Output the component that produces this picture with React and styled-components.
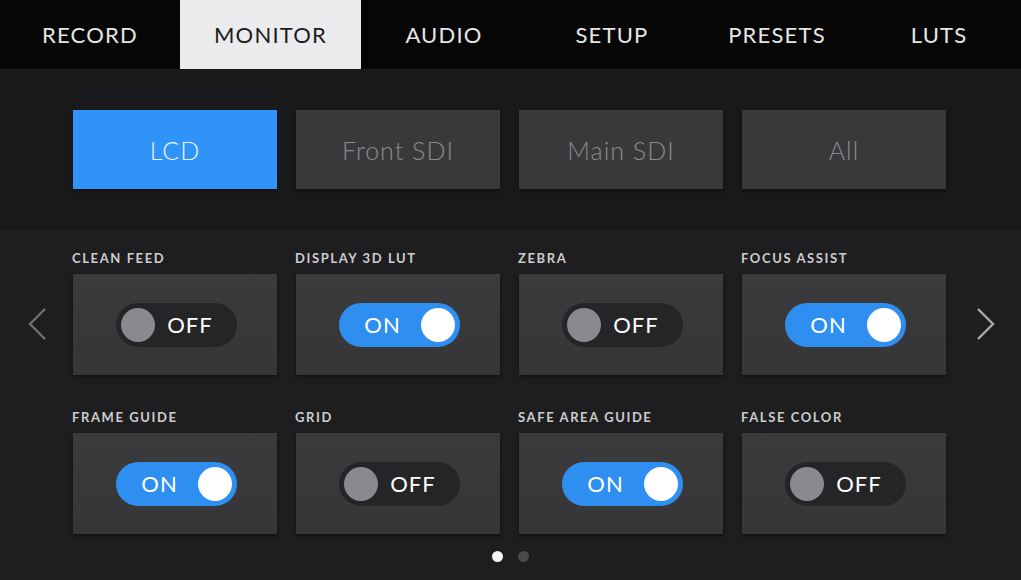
import React from "react";
import styled, { createGlobalStyle } from "styled-components";

const GlobalStyle = createGlobalStyle`
  html, body {
    margin: 0;
    padding: 0;
    background: #1e1e20;
  }
  body {
    font-family: Lato, "Open Sans", sans-serif;
  }
`;

const Screen = styled.div`
  width: 1021px;
  height: 580px;
  overflow: hidden;
  background: #1e1e20;
  display: flex;
  flex-direction: column;
`;

const TabBar = styled.div`
  display: flex;
  height: 69px;
  background: #060606;
`;

const Tab = styled.div`
  width: ${(p) => p.$w}px;
  display: flex;
  align-items: center;
  justify-content: center;
  font-size: 22px;
  letter-spacing: 1.2px;
  color: ${(p) => (p.$active ? "#1d1d1f" : "#e6e6e6")};
  background: ${(p) => (p.$active ? "#ebebed" : "transparent")};
`;

const OutputBand = styled.div`
  background: #19191b;
  height: 161px;
  box-sizing: border-box;
  padding: 41px 0 0 73px;
  display: flex;
  gap: 19px;
`;

const OutputButton = styled.div`
  width: 204px;
  height: 79px;
  display: flex;
  align-items: center;
  justify-content: center;
  font-size: 25px;
  font-weight: 300;
  letter-spacing: 1px;
  color: ${(p) => (p.$active ? "#eef5ff" : "#8b8b8e")};
  background: ${(p) => (p.$active ? "#2f93f7" : "#39393b")};
  box-shadow: 0 2px 3px rgba(0, 0, 0, 0.45);
`;

const Lower = styled.div`
  flex: 1;
  display: flex;
  flex-direction: column;
  align-items: center;
  padding-top: 20px;
`;

const Middle = styled.div`
  display: flex;
  width: 1021px;
`;

const Side = styled.div`
  width: ${(p) => p.$w}px;
  display: flex;
  justify-content: center;
  padding-top: 57px;
  padding-left: ${(p) => p.$shift || 0}px;
  box-sizing: border-box;
`;

const Grid = styled.div`
  display: grid;
  grid-template-columns: repeat(4, 204px);
  column-gap: 19px;
  row-gap: 34px;
`;

const Cell = styled.div`
  display: flex;
  flex-direction: column;
`;

const Label = styled.div`
  height: 16px;
  line-height: 16px;
  margin-bottom: 8px;
  margin-left: -1px;
  font-size: 13px;
  font-weight: 700;
  letter-spacing: 1.6px;
  color: #cdcdcf;
`;

const Card = styled.div`
  height: 101px;
  background: linear-gradient(180deg, #3b3b3d 0%, #363638 100%);
  box-shadow: 0 2px 4px rgba(0, 0, 0, 0.5);
  display: flex;
  align-items: center;
  justify-content: center;
`;

const Pill = styled.div`
  width: 121px;
  height: 44px;
  border-radius: 22px;
  box-sizing: border-box;
  padding: 0 5px;
  margin-left: 2px;
  display: flex;
  align-items: center;
  flex-direction: ${(p) => (p.$on ? "row-reverse" : "row")};
  background: ${(p) => (p.$on ? "#2f8ff0" : "#252528")};
`;

const Knob = styled.div`
  width: 34px;
  height: 34px;
  border-radius: 50%;
  flex-shrink: 0;
  background: ${(p) => (p.$on ? "#ffffff" : "#898a8f")};
`;

const State = styled.div`
  flex: 1;
  text-align: center;
  font-size: 22px;
  letter-spacing: 1px;
  color: #ffffff;
  margin: ${(p) => (p.$on ? "0 0 0 1px" : "0 6px 0 0")};
`;

const Dots = styled.div`
  display: flex;
  gap: 15px;
  margin-top: 17px;
`;

const Dot = styled.div`
  width: 11px;
  height: 11px;
  border-radius: 50%;
  background: ${(p) => (p.$active ? "#f4f4f6" : "#4a4a4d")};
`;

const tabs = [
  ["RECORD", 180],
  ["MONITOR", 181],
  ["AUDIO", 166],
  ["SETUP", 170],
  ["PRESETS", 160],
  ["LUTS", 164],
];

const outputs = ["LCD", "Front SDI", "Main SDI", "All"];

const settings = [
  ["CLEAN FEED", false],
  ["DISPLAY 3D LUT", true],
  ["ZEBRA", false],
  ["FOCUS ASSIST", true],
  ["FRAME GUIDE", true],
  ["GRID", false],
  ["SAFE AREA GUIDE", true],
  ["FALSE COLOR", false],
];

function Chevron({ dir, color }) {
  const d = dir === "left" ? "M18 2 L3 17 L18 32" : "M2 2 L17 17 L2 32";
  return (
    <svg width="20" height="34" viewBox="0 0 20 34">
      <path d={d} fill="none" stroke={color} strokeWidth="2.4" />
    </svg>
  );
}

function Toggle({ on }) {
  return (
    <Pill $on={on}>
      <Knob $on={on} />
      <State $on={on}>{on ? "ON" : "OFF"}</State>
    </Pill>
  );
}

export default function App() {
  return (
    <Screen>
      <GlobalStyle />
      <TabBar>
        {tabs.map(([name, w]) => (
          <Tab key={name} $w={w} $active={name === "MONITOR"}>
            {name}
          </Tab>
        ))}
      </TabBar>

      <OutputBand>
        {outputs.map((o) => (
          <OutputButton key={o} $active={o === "LCD"}>
            {o}
          </OutputButton>
        ))}
      </OutputBand>

      <Lower>
        <Middle>
          <Side $w={73}>
            <Chevron dir="left" color="#6f6f73" />
          </Side>
          <Grid>
            {settings.map(([label, on]) => (
              <Cell key={label}>
                <Label>{label}</Label>
                <Card>
                  <Toggle on={on} />
                </Card>
              </Cell>
            ))}
          </Grid>
          <Side $w={75} $shift={5}>
            <Chevron dir="right" color="#a9a9ac" />
          </Side>
        </Middle>
        <Dots>
          <Dot $active />
          <Dot />
        </Dots>
      </Lower>
    </Screen>
  );
}
